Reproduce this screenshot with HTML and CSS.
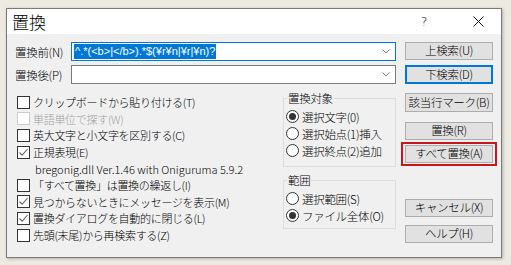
FILE: index.html
```html
<!DOCTYPE html>
<html lang="ja">
<head>
<meta charset="utf-8">
<link rel="stylesheet" href="styles.css">
</head>
<body>
<div class="dialog">
  <div class="titlebar">
    <span class="title">置換</span>
    <span class="cap help">?</span>
    <span class="cap close"><svg width="11" height="11" viewBox="0 0 11 11"><path d="M0.5 0.5 L10.5 10.5 M10.5 0.5 L0.5 10.5" stroke="#111" stroke-width="1" fill="none"/></svg></span>
  </div>
  <div class="content">
    <div class="main">
      <div class="field">
        <span class="flabel">置換前(N)</span>
        <div class="combo focused">
          <span class="sel">^.*(&lt;b&gt;|&lt;/b&gt;).*$(¥r¥n|¥r|¥n)?</span>
          <svg class="chev" width="8" height="5" viewBox="0 0 8 5"><path d="M0.5 0.5 L4 4 L7.5 0.5" stroke="#777" fill="none"/></svg>
        </div>
      </div>
      <div class="field">
        <span class="flabel">置換後(P)</span>
        <div class="combo">
          <span class="sel empty"></span>
          <svg class="chev" width="8" height="5" viewBox="0 0 8 5"><path d="M0.5 0.5 L4 4 L7.5 0.5" stroke="#777" fill="none"/></svg>
        </div>
      </div>
      <div class="lower">
        <div class="checks">
          <div class="row"><span class="cb"></span>クリップボードから貼り付ける(T)</div>
          <div class="row disabled"><span class="cb"></span>単語単位で探す(W)</div>
          <div class="row"><span class="cb"></span>英大文字と小文字を区別する(C)</div>
          <div class="row"><span class="cb on"><svg width="11" height="11" viewBox="0 0 11 11"><path d="M1.5 5.5 L4.2 8.2 L9.5 2" stroke="#666" stroke-width="1.1" fill="none"/></svg></span>正規表現(E)</div>
          <div class="row info">bregonig.dll Ver.1.46 with Oniguruma 5.9.2</div>
          <div class="row"><span class="cb"></span>「すべて置換」は置換の繰返し(I)</div>
          <div class="row"><span class="cb on"><svg width="11" height="11" viewBox="0 0 11 11"><path d="M1.5 5.5 L4.2 8.2 L9.5 2" stroke="#666" stroke-width="1.1" fill="none"/></svg></span>見つからないときにメッセージを表示(M)</div>
          <div class="row"><span class="cb on"><svg width="11" height="11" viewBox="0 0 11 11"><path d="M1.5 5.5 L4.2 8.2 L9.5 2" stroke="#666" stroke-width="1.1" fill="none"/></svg></span>置換ダイアログを自動的に閉じる(L)</div>
          <div class="row"><span class="cb"></span>先頭(末尾)から再検索する(Z)</div>
        </div>
        <div class="groups">
          <fieldset class="group g1">
            <legend>置換対象</legend>
            <div class="radio"><span class="rb on"></span>選択文字(0)</div>
            <div class="radio"><span class="rb"></span>選択始点(1)挿入</div>
            <div class="radio"><span class="rb"></span>選択終点(2)追加</div>
          </fieldset>
          <fieldset class="group g2">
            <legend>範囲</legend>
            <div class="radio"><span class="rb"></span>選択範囲(S)</div>
            <div class="radio"><span class="rb on"></span>ファイル全体(O)</div>
          </fieldset>
        </div>
      </div>
    </div>
    <div class="buttons">
      <div class="btn b-up">上検索(U)</div>
      <div class="btn b-down default">下検索(D)</div>
      <div class="btn b-mark">該当行マーク(B)</div>
      <div class="btn b-rep">置換(R)</div>
      <div class="hl"><div class="btn">すべて置換(A)</div></div>
      <div class="btn b-cancel">キャンセル(X)</div>
      <div class="btn b-help">ヘルプ(H)</div>
    </div>
  </div>
</div>
</body>
</html>
```

FILE: styles.css
```css
* { box-sizing: border-box; }
html, body { margin: 0; padding: 0; }
body {
  width: 511px;
  height: 265px;
  background: #edeae1;
  font-family: "Noto Sans CJK JP", "Noto Sans", sans-serif;
  font-weight: 300;
  font-size: 11px;
  letter-spacing: -0.3px;
  color: #000;
  padding: 8px 0 0 6px;
  overflow: hidden;
}
.dialog {
  width: 496px;
  height: 250px;
  border: 1px solid #7a7a7a;
  background: #f0f0f0;
  box-shadow: 1px 1px 3px rgba(0,0,0,0.25);
  display: flex;
  flex-direction: column;
}
.titlebar {
  height: 25px;
  background: #fff;
  display: flex;
  align-items: center;
  flex: none;
}
.title {
  font-size: 17px;
  letter-spacing: 0;
  margin-left: 5px;
  flex: 1;
  line-height: 25px;
}
.cap {
  width: 46px;
  height: 25px;
  display: flex;
  align-items: center;
  justify-content: center;
}
.help { font-family: "DejaVu Sans", sans-serif; font-size: 12px; margin-right: 8px; }
.content {
  flex: 1;
  display: flex;
  padding: 8px 7px 0 8px;
}
.main {
  width: 381px;
  display: flex;
  flex-direction: column;
}
.field {
  display: flex;
  align-items: center;
  height: 19px;
  margin-bottom: 4px;
}
.flabel {
  width: 56px;
  white-space: nowrap;
  font-size: 11.5px;
}
.combo {
  width: 325px;
  height: 19px;
  border: 1px solid #7a7a7a;
  background: #fff;
  display: flex;
  align-items: center;
  padding-left: 2px;
}
.combo.focused { border-color: #0078d7; }
.sel {
  background: #0078d7;
  color: #fff;
  line-height: 15px;
  height: 15px;
  white-space: nowrap;
  font-family: "Liberation Sans", "Noto Sans CJK JP", sans-serif;
  font-weight: 400;
  font-size: 11px;
  letter-spacing: 0;
  padding: 0 1px;
  flex: none;
}
.sel.empty { background: transparent; }
.chev { margin-left: auto; margin-right: 5px; }
.lower {
  display: flex;
  margin-top: 6px;
}
.checks {
  flex: 1;
  padding-left: 2px;
}
.row {
  height: 16.6px;
  display: flex;
  align-items: center;
  white-space: nowrap;
}
.row.disabled { color: #a0a0a0; }
.row.disabled .cb { border-color: #cccccc; }
.row.info { padding-left: 18px; letter-spacing: 0; }
.cb {
  width: 13px;
  height: 13px;
  border: 1px solid #333;
  background: #fff;
  margin-right: 3px;
  flex: none;
  display: flex;
  align-items: center;
  justify-content: center;
}
.cb svg { display: block; }
.groups {
  width: 113px;
  display: flex;
  flex-direction: column;
}
.group {
  margin: 0;
  border: 1px solid #dcdcdc;
  padding: 0 0 0 2px;
  min-width: 0;
}
.group legend {
  padding: 0 1px;
  margin-left: 1px;
  line-height: 14px;
  font-size: 11.5px;
}
.g1 { margin-top: -3px; height: 76px; padding-top: 3px; }
.g2 { margin-top: 6px; height: 56px; padding-top: 3px; }
.radio {
  height: 17px;
  display: flex;
  align-items: center;
  white-space: nowrap;
  font-size: 11.5px;
}
.rb {
  width: 13px;
  height: 13px;
  border: 1px solid #333;
  border-radius: 50%;
  background: #fff;
  margin-right: 3px;
  flex: none;
  display: flex;
  align-items: center;
  justify-content: center;
}
.rb.on::after {
  content: "";
  width: 7px;
  height: 7px;
  border-radius: 50%;
  background: #333;
}
.buttons {
  margin-left: 9px;
  width: 88px;
  display: flex;
  flex-direction: column;
}
.btn {
  width: 88px;
  height: 18px;
  background: #e1e1e1;
  border: 1px solid #adadad;
  display: flex;
  align-items: center;
  justify-content: center;
  white-space: nowrap;
  line-height: 1;
  font-size: 11.5px;
}
.btn.default { border: 2px solid #0078d7; }
.b-down { margin-top: 5px; height: 19px; }
.b-mark { margin-top: 9px; height: 19px; }
.b-rep { margin-top: 10px; }
.hl {
  margin: 2px -4px 0 -4px;
  border: 2px solid #c8161d;
  padding: 1px 2px;
  width: 96px;
}
.b-cancel { margin-top: 33px; }
.b-help { margin-top: 8px; }
```
